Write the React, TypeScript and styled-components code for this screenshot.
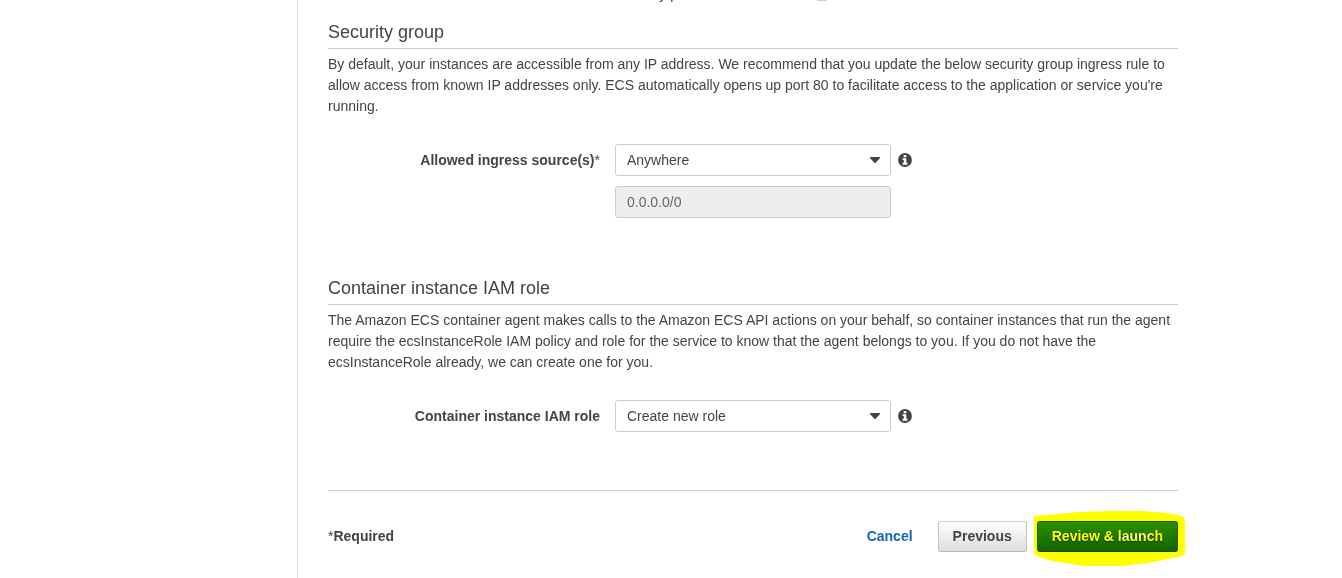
import React from "react";
import styled, { createGlobalStyle } from "styled-components";

const GlobalStyle = createGlobalStyle`
  *, *::before, *::after { box-sizing: border-box; }
  body {
    margin: 0;
    background: #fff;
    color: #444;
    font: 14px/21px "Liberation Sans", Arial, sans-serif;
  }
`;

const Page = styled.div`
  display: flex;
  min-height: 100vh;
  overflow: hidden;
`;

const StepsRail = styled.aside`
  flex: 0 0 298px;
  border-right: 1px solid #ddd;
`;

const Content = styled.main`
  flex: 1;
  max-width: 910px;
  padding: 0 30px 24px;
`;

const FieldRow = styled.div`
  display: grid;
  grid-template-columns: 32% minmax(0, 276px) auto;
  column-gap: 15px;
  justify-content: start;
`;

/* Last line of the preceding field's help text, scrolled almost out of view. */
const ScrolledHint = styled(FieldRow)`
  grid-template-rows: 5px;
  height: 5px;
  overflow: hidden;
  align-items: end;
`;

const Hint = styled.p`
  grid-column: 2;
  display: flex;
  align-items: center;
  margin: 0;
  white-space: pre;
`;

const Link = styled.a<{ $bold?: boolean }>`
  color: #1166bb;
  font-weight: ${(p) => (p.$bold ? 700 : 400)};
  text-decoration: none;
`;

const Section = styled.section<{ $first?: boolean }>`
  padding-top: ${(p) => (p.$first ? 15 : 58)}px;
`;

const Heading = styled.h2`
  margin: 0 0 5px;
  padding-bottom: 4px;
  border-bottom: 1px solid #ccc;
  font-size: 18px;
  line-height: 24px;
  font-weight: 400;
`;

const Paragraph = styled.p`
  margin: 0 0 27px;
`;

const Label = styled.label`
  line-height: 32px;
  font-weight: 700;
  text-align: right;
`;

const Star = styled.span`
  font-weight: 400;
`;

const Fields = styled.div`
  display: flex;
  flex-direction: column;
  gap: 10px;
`;

const SelectBox = styled.div`
  position: relative;
  display: flex;
`;

const Select = styled.select`
  appearance: none;
  width: 100%;
  height: 32px;
  padding: 0 30px 0 11px;
  border: 1px solid #ccc;
  border-radius: 3px;
  background: #fff;
  color: #444;
  font: inherit;
`;

const Caret = styled.svg`
  position: absolute;
  top: 13px;
  right: 10px;
  pointer-events: none;
`;

const TextInput = styled.input`
  width: 100%;
  height: 32px;
  padding: 0 11px;
  border: 1px solid #ccc;
  border-radius: 3px;
  background: #eee;
  color: #666;
  font: inherit;
`;

const InfoButton = styled.button`
  display: flex;
  align-items: center;
  height: 32px;
  margin-left: -8px;
  padding: 0;
  border: 0;
  background: none;
`;

const Footer = styled.footer`
  display: flex;
  align-items: center;
  margin-top: 58px;
  padding-top: 30px;
  border-top: 1px solid #ccc;
`;

const Required = styled.span`
  margin-right: auto;
  font-weight: 700;
`;

const Button = styled.button<{ $primary?: boolean }>`
  height: 31px;
  padding: 0 14px;
  border: 1px solid;
  border-color: ${(p) => (p.$primary ? "#1a6000 #1a5f00 #0e4a00" : "#ccc #c4c4c4 #b8b8b8")};
  border-radius: 3px;
  background: ${(p) =>
    p.$primary
      ? "linear-gradient(#2b8f00, #146400)"
      : "linear-gradient(#fff, #ddd)"};
  color: ${(p) => (p.$primary ? "#fff" : "#444")};
  text-shadow: ${(p) => (p.$primary ? "0 1px 2px #003300" : "none")};
  font: inherit;
  font-weight: 700;
  white-space: nowrap;
`;

const Actions = styled.div`
  display: flex;
  align-items: center;
  gap: 10px;

  ${Link} {
    margin-right: 15px;
  }
`;

const Highlighted = styled.div`
  position: relative;
  display: flex;
`;

const Marker = styled.svg`
  position: absolute;
  top: -11px;
  left: -5px;
  mix-blend-mode: multiply;
  pointer-events: none;
`;

function DownCaret() {
  return (
    <Caret width="12" height="7" viewBox="0 0 12 7" aria-hidden="true">
      <path d="M1 0h10v1L6.500 6h-1L1 1z" fill="#444" />
    </Caret>
  );
}

function Info({ label }: { label: string }) {
  return (
    <InfoButton type="button" aria-label={label}>
      <svg width="14" height="14" viewBox="0 0 14 14" aria-hidden="true">
        <circle cx="7" cy="7" r="6.9" fill="#444" />
        <path d="M5.7 2h2.6v2.2H5.7zM4.6 5.2h3.7v4.6h1.2v1.9H4.6V9.800h1.200V7H4.600z" fill="#fff" />
      </svg>
    </InfoButton>
  );
}

export default function App() {
  return (
    <>
      <GlobalStyle />
      <Page>
        <StepsRail />
        <Content>
          <ScrolledHint>
            <Hint>
              new key pair in the <Link href="#ec2">EC2 console</Link>
              <svg width="12" height="13" viewBox="0 0 12 13" aria-hidden="true">
                <path d="M3 4h8v8H3z" fill="none" stroke="#b8d4ee" strokeWidth="2" />
              </svg>
            </Hint>
          </ScrolledHint>

          <Section $first>
            <Heading>Security group</Heading>
            <Paragraph>
              By default, your instances are accessible from any IP address. We recommend that you
              update the below security group ingress rule to allow access from known IP addresses
              only. ECS automatically opens up port 80 to facilitate access to the application or
              service you're running.
            </Paragraph>
            <FieldRow>
              <Label htmlFor="ingress">
                Allowed ingress source(s)<Star>*</Star>
              </Label>
              <Fields>
                <SelectBox>
                  <Select id="ingress" defaultValue="Anywhere">
                    <option>Anywhere</option>
                  </Select>
                  <DownCaret />
                </SelectBox>
                <TextInput aria-label="CIDR block" defaultValue="0.0.0.0/0" disabled />
              </Fields>
              <Info label="About ingress sources" />
            </FieldRow>
          </Section>

          <Section>
            <Heading>Container instance IAM role</Heading>
            <Paragraph>
              The Amazon ECS container agent makes calls to the Amazon ECS API actions on your
              behalf, so container instances that run the agent require the ecsInstanceRole IAM
              policy and role for the service to know that the agent belongs to you. If you do not
              have the ecsInstanceRole already, we can create one for you.
            </Paragraph>
            <FieldRow>
              <Label htmlFor="role">Container instance IAM role</Label>
              <SelectBox>
                <Select id="role" defaultValue="Create new role">
                  <option>Create new role</option>
                </Select>
                <DownCaret />
              </SelectBox>
              <Info label="About the IAM role" />
            </FieldRow>
          </Section>

          <Footer>
            <Required>
              <Star>*</Star>Required
            </Required>
            <Actions>
              <Link href="#cancel" $bold>
                Cancel
              </Link>
              <Button type="button">Previous</Button>
              <Highlighted>
                <Button type="button" $primary>
                  Review &amp; launch
                </Button>
                <Marker width="154" height="58" viewBox="0 0 154 58" aria-hidden="true">
                  <path
                    d="M2 6L26 4 46 2 80 1h32l22 2 13 2 5 3 1 5v30l-3 3-14 3-20 4-25 3-14 0H52l-20-3-16-3-11-4-3-3zM87 27l13-1 1-1h17v2l-15 1-16 1z"
                    fill="#ff0"
                    fillRule="evenodd"
                  />
                </Marker>
              </Highlighted>
            </Actions>
          </Footer>
        </Content>
      </Page>
    </>
  );
}
